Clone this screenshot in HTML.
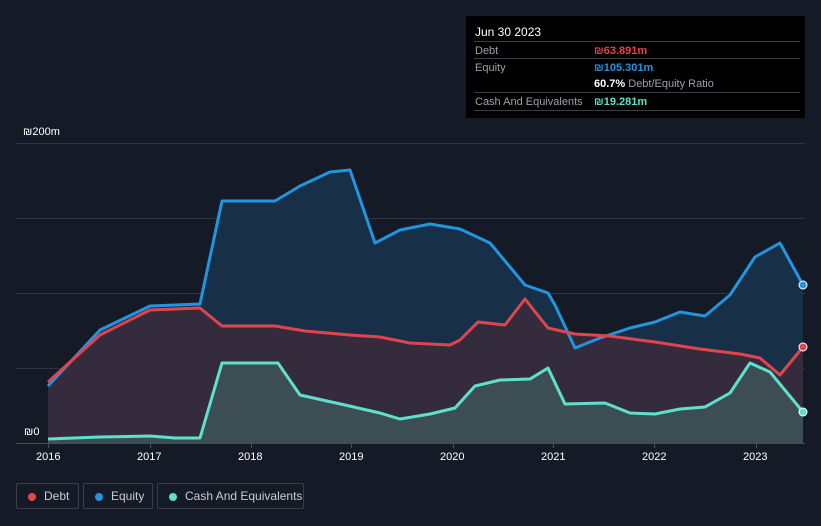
<!DOCTYPE html>
<html><head><meta charset="utf-8"><style>
body{margin:0;background:#151b26;width:821px;height:526px;overflow:hidden;font-family:"Liberation Sans",sans-serif;position:relative}
.tt{position:absolute;left:466px;top:16px;width:339px;height:102px;background:#000;color:#fff;font-size:11px}
.tt .h{position:absolute;left:9px;top:9px;font-size:12px}
.row{position:absolute;left:8px;width:326px;border-top:1px solid #3a3d44;height:17px}
.row span{position:absolute;top:3px}
.l{left:1px;color:#9ba1a8}.v{left:120px;font-weight:bold}
.lg{position:absolute;top:483px;height:26px;border:1px solid #3a3f4a;border-radius:2px;color:#c9ccd1;font-size:12px;box-sizing:border-box}
.lg i{position:absolute;left:11px;top:9px;width:8px;height:8px;border-radius:50%}
.lg span{position:absolute;left:27px;top:5px}
.ax{position:absolute;color:#fff;font-size:11px}
</style></head><body>
<svg width="821" height="526" style="position:absolute;left:0;top:0">
<g stroke="#2e3440" stroke-width="1">
<line x1="16" y1="143.5" x2="805" y2="143.5"/><line x1="16" y1="218.5" x2="805" y2="218.5"/><line x1="16" y1="293.5" x2="805" y2="293.5"/><line x1="16" y1="368.5" x2="805" y2="368.5"/><line x1="16" y1="443.5" x2="805" y2="443.5" stroke="#4a505a"/>
</g>
<polygon fill="#17324b" fill-opacity="0.9" points="48,386 100,330 150,306 200,304 222,201 275,201 300,186 330,172 350,170 375,243 400,230 430,224 460,229 490,243 525,285 548,293 555,305 575,348 600,338 630,328 655,322 680,312 705,316 730,295 755,257 780,243 803,285 803,443 48,443"/>
<polygon fill="#3a2b3c" fill-opacity="0.85" points="48,382 100,335 150,310 200,308 222,326 275,326 305,331 350,335 380,337 410,343 450,345 460,340 478,322 505,325 525,299 548,328 575,334 610,336 655,342 700,349 740,354 760,358 780,375 803,347 803,443 48,443"/>
<polygon fill="#3f5a5c" fill-opacity="0.75" points="48,439 100,437 150,436 175,438 200,438 222,363 278,363 300,395 345,405 380,413 400,419 430,414 455,408 475,386 500,380 530,379 548,368 565,404 605,403 630,413 655,414 680,409 705,407 730,393 750,363 770,372 803,412 803,443 48,443"/>
<g fill="none" stroke-width="3" stroke-linejoin="round">
<polyline stroke="#2394df" points="48,386 100,330 150,306 200,304 222,201 275,201 300,186 330,172 350,170 375,243 400,230 430,224 460,229 490,243 525,285 548,293 555,305 575,348 600,338 630,328 655,322 680,312 705,316 730,295 755,257 780,243 803,285"/>
<polyline stroke="#e0454f" points="48,382 100,335 150,310 200,308 222,326 275,326 305,331 350,335 380,337 410,343 450,345 460,340 478,322 505,325 525,299 548,328 575,334 610,336 655,342 700,349 740,354 760,358 780,375 803,347"/>
<polyline stroke="#5fe0cc" points="48,439 100,437 150,436 175,438 200,438 222,363 278,363 300,395 345,405 380,413 400,419 430,414 455,408 475,386 500,380 530,379 548,368 565,404 605,403 630,413 655,414 680,409 705,407 730,393 750,363 770,372 803,412"/>
</g>
<circle cx="803" cy="285" r="4" fill="#2394df" stroke="#fff" stroke-width="1"/>
<circle cx="803" cy="347" r="4" fill="#e0454f" stroke="#fff" stroke-width="1"/>
<circle cx="803" cy="412" r="4" fill="#5fe0cc" stroke="#fff" stroke-width="1"/>
<g stroke="#4a505a"><line x1="48.5" y1="443" x2="48.5" y2="448"/><line x1="150.5" y1="443" x2="150.5" y2="448"/><line x1="251.5" y1="443" x2="251.5" y2="448"/><line x1="351.5" y1="443" x2="351.5" y2="448"/><line x1="453.5" y1="443" x2="453.5" y2="448"/><line x1="553.5" y1="443" x2="553.5" y2="448"/><line x1="654.5" y1="443" x2="654.5" y2="448"/><line x1="756.5" y1="443" x2="756.5" y2="448"/></g>
</svg>
<div class="ax" style="left:23px;top:126px">₪200m</div>
<div class="ax" style="left:16px;top:426px;background:#151b26;padding:0 6px 2px 8px">₪0</div>
<div class="ax" style="left:36px;top:451px">2016</div><div class="ax" style="left:137px;top:451px">2017</div><div class="ax" style="left:238px;top:451px">2018</div><div class="ax" style="left:339px;top:451px">2019</div><div class="ax" style="left:440px;top:451px">2020</div><div class="ax" style="left:541px;top:451px">2021</div><div class="ax" style="left:642px;top:451px">2022</div><div class="ax" style="left:743px;top:451px">2023</div>
<div class="tt"><div class="h">Jun 30 2023</div>
<div class="row" style="top:25px"><span class="l">Debt</span><span class="v" style="color:#e0454f">₪63.891m</span></div>
<div class="row" style="top:42px"><span class="l">Equity</span><span class="v" style="color:#2394df">₪105.301m</span></div>
<div class="row" style="top:59px;border-top:none"><span class="v" style="color:#fff">60.7% <b style="font-weight:normal;color:#9ba1a8">Debt/Equity Ratio</b></span></div>
<div class="row" style="top:76px;height:17px;border-bottom:1px solid #3a3d44"><span class="l">Cash And Equivalents</span><span class="v" style="color:#5fe0cc">₪19.281m</span></div>
</div>
<div class="lg" style="left:16px;width:63px"><i style="background:#e0454f"></i><span>Debt</span></div>
<div class="lg" style="left:83px;width:70px"><i style="background:#2394df"></i><span>Equity</span></div>
<div class="lg" style="left:157px;width:147px"><i style="background:#5fe0cc"></i><span>Cash And Equivalents</span></div>
</body></html>
